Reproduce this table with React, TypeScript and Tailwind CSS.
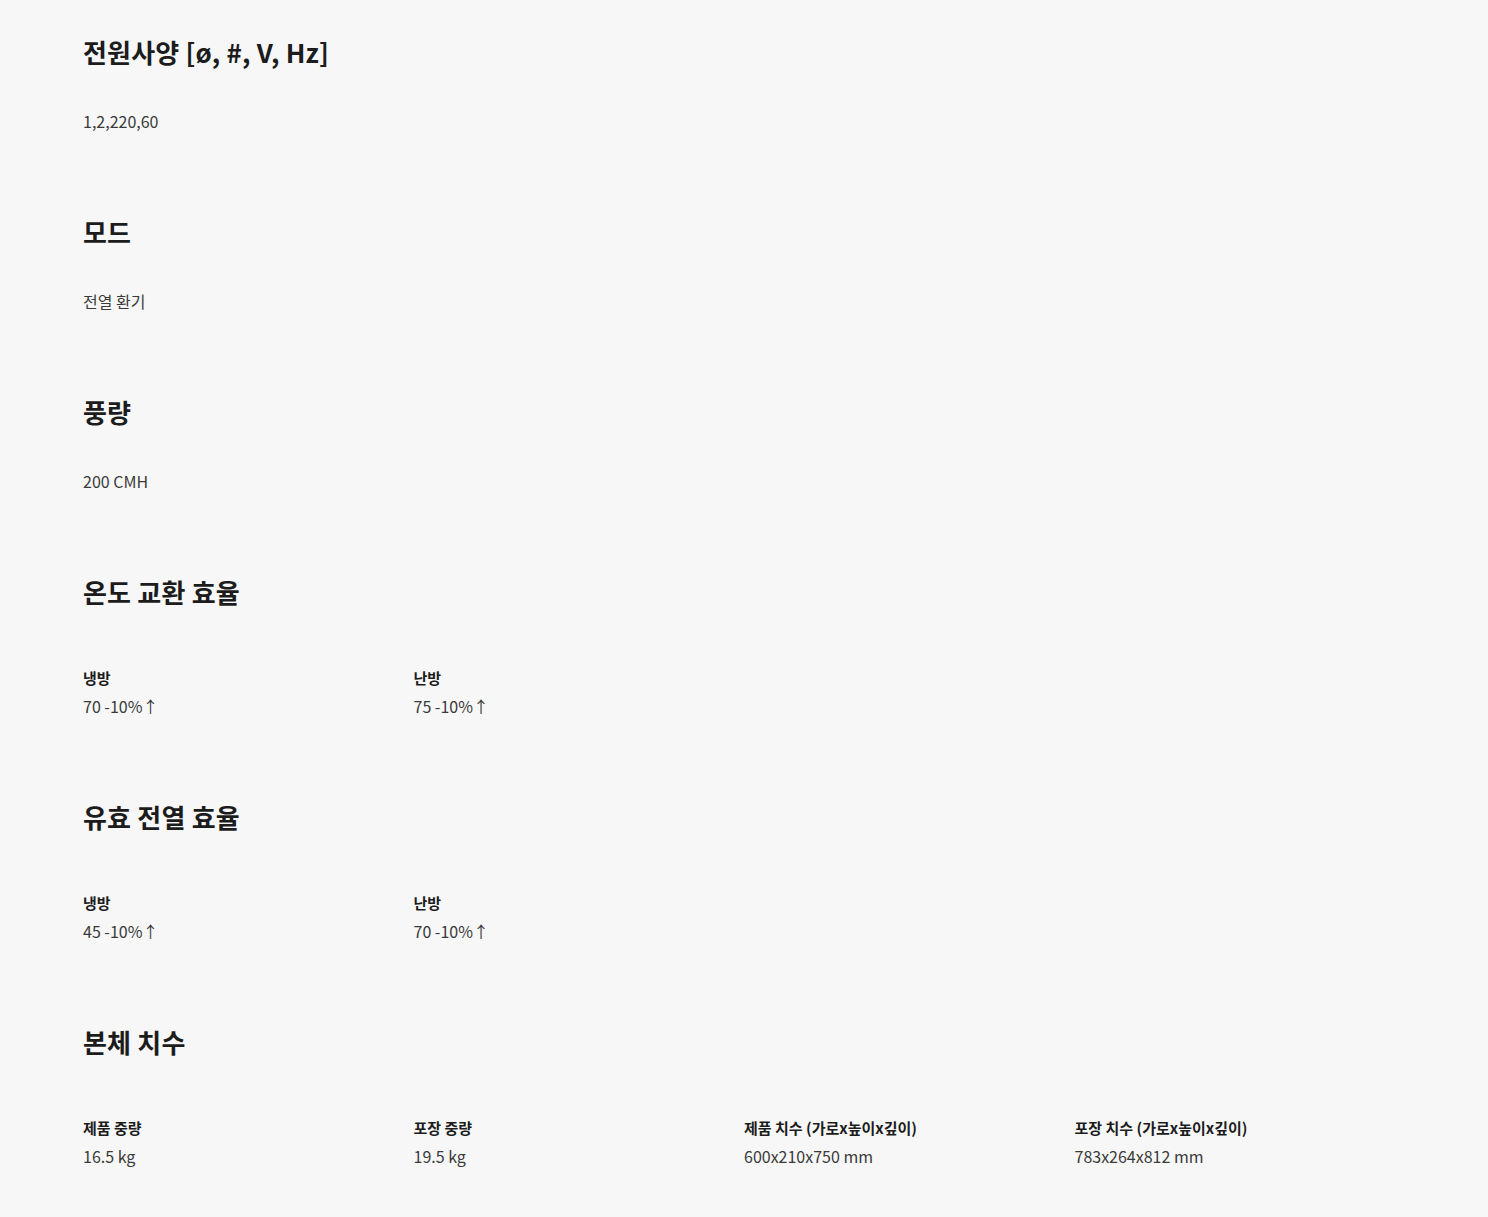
const font = { fontFamily: '"Noto Sans CJK KR", "Noto Sans", sans-serif' };

interface SpecItem {
  label: string
  value: string
}

function SimpleSection(props: { title: string; value: string }) {
  return (
    <section className="flex flex-col">
      <h3 className="text-[26px] leading-[34px] font-bold tracking-[0.2px] text-[#1c1c1c]">{props.title}</h3>
      <p className="mt-[40px] text-[16px] leading-[24px] text-[#3a3a3a]">{props.value}</p>
    </section>
  );
}

function GridSection(props: { title: string; items: SpecItem[] }) {
  return (
    <section className="flex flex-col">
      <h3 className="text-[26px] leading-[34px] font-bold tracking-[0.2px] text-[#1c1c1c]">{props.title}</h3>
      <div className="mt-[58px] grid grid-cols-4">
        {props.items.map((item) => (
          <div key={item.label} className="flex flex-col gap-[5px]">
            <span className="text-[15px] leading-[22px] font-bold text-[#1c1c1c]">{item.label}</span>
            <span className="text-[16px] leading-[24px] text-[#3a3a3a]">{item.value}</span>
          </div>
        ))}
      </div>
    </section>
  );
}

export default function App() {
  return (
    <div className="min-h-[1217px] bg-[#f7f7f7] px-[83px] pt-[35px] pb-[40px]" style={font}>
      <div className="flex flex-col gap-[82px]">
        <SimpleSection title="전원사양 [ø, #, V, Hz]" value="1,2,220,60" />
        <SimpleSection title="모드" value="전열 환기" />
        <SimpleSection title="풍량" value="200 CMH" />
        <GridSection
          title="온도 교환 효율"
          items={[
            { label: "냉방", value: "70 -10%↑" },
            { label: "난방", value: "75 -10%↑" },
          ]}
        />
        <GridSection
          title="유효 전열 효율"
          items={[
            { label: "냉방", value: "45 -10%↑" },
            { label: "난방", value: "70 -10%↑" },
          ]}
        />
        <GridSection
          title="본체 치수"
          items={[
            { label: "제품 중량", value: "16.5 kg" },
            { label: "포장 중량", value: "19.5 kg" },
            { label: "제품 치수 (가로x높이x깊이)", value: "600x210x750 mm" },
            { label: "포장 치수 (가로x높이x깊이)", value: "783x264x812 mm" },
          ]}
        />
      </div>
    </div>
  );
}
